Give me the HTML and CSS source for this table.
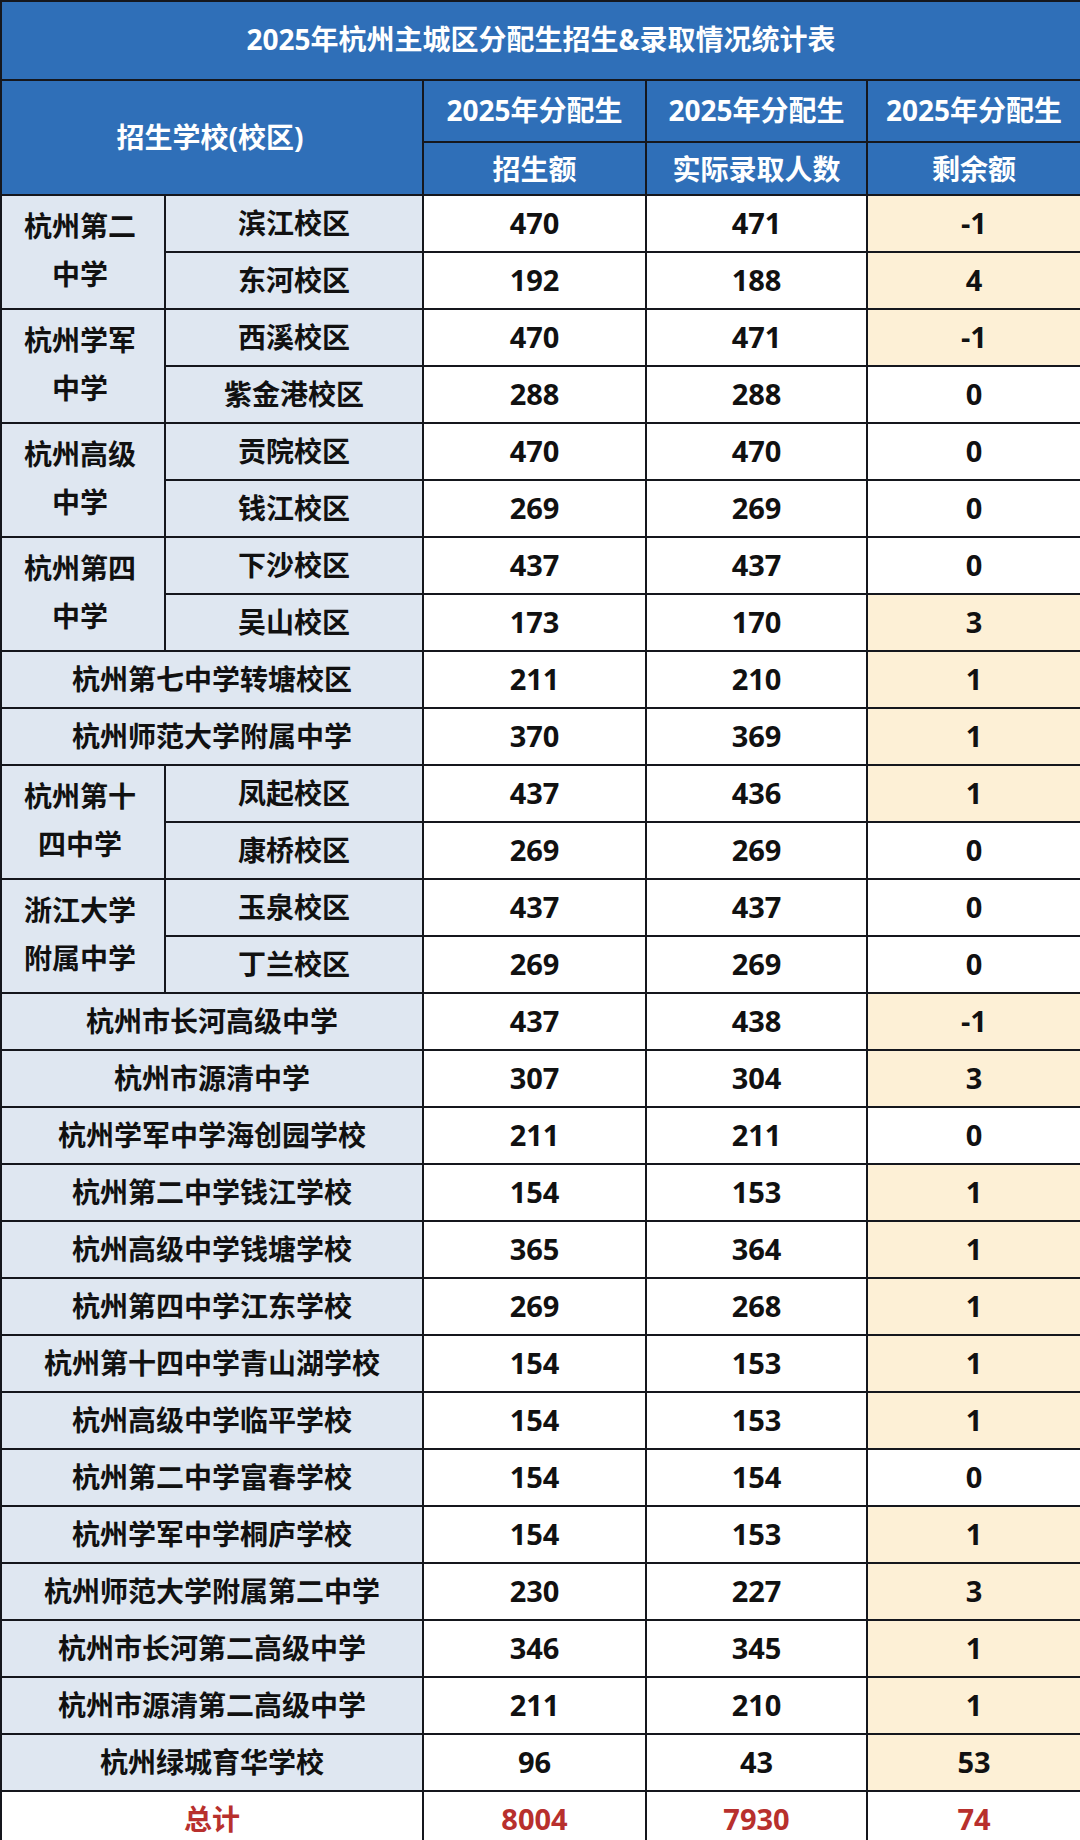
FILE: index.html
```html
<!DOCTYPE html>
<html lang="zh-CN">
<head>
<meta charset="utf-8">
<title>2025年杭州主城区分配生招生&amp;录取情况统计表</title>
<link rel="stylesheet" href="styles.css">
</head>
<body>
<div class="sheet">
  <div class="cell title">2025年杭州主城区分配生招生&amp;录取情况统计表</div>

  <div class="cell head school-head">招生学校(校区)</div>
  <div class="cell head">2025年分配生</div>
  <div class="cell head">2025年分配生</div>
  <div class="cell head">2025年分配生</div>
  <div class="cell head sub">招生额</div>
  <div class="cell head sub">实际录取人数</div>
  <div class="cell head sub">剩余额</div>

  <div class="cell name group">杭州第二<br>中学</div>
  <div class="cell name">滨江校区</div><div class="cell num">470</div><div class="cell num">471</div><div class="cell num hl">-1</div>
  <div class="cell name">东河校区</div><div class="cell num">192</div><div class="cell num">188</div><div class="cell num hl">4</div>

  <div class="cell name group">杭州学军<br>中学</div>
  <div class="cell name">西溪校区</div><div class="cell num">470</div><div class="cell num">471</div><div class="cell num hl">-1</div>
  <div class="cell name">紫金港校区</div><div class="cell num">288</div><div class="cell num">288</div><div class="cell num">0</div>

  <div class="cell name group">杭州高级<br>中学</div>
  <div class="cell name">贡院校区</div><div class="cell num">470</div><div class="cell num">470</div><div class="cell num">0</div>
  <div class="cell name">钱江校区</div><div class="cell num">269</div><div class="cell num">269</div><div class="cell num">0</div>

  <div class="cell name group">杭州第四<br>中学</div>
  <div class="cell name">下沙校区</div><div class="cell num">437</div><div class="cell num">437</div><div class="cell num">0</div>
  <div class="cell name">吴山校区</div><div class="cell num">173</div><div class="cell num">170</div><div class="cell num hl">3</div>

  <div class="cell name wide">杭州第七中学转塘校区</div><div class="cell num">211</div><div class="cell num">210</div><div class="cell num hl">1</div>
  <div class="cell name wide">杭州师范大学附属中学</div><div class="cell num">370</div><div class="cell num">369</div><div class="cell num hl">1</div>

  <div class="cell name group">杭州第十<br>四中学</div>
  <div class="cell name">凤起校区</div><div class="cell num">437</div><div class="cell num">436</div><div class="cell num hl">1</div>
  <div class="cell name">康桥校区</div><div class="cell num">269</div><div class="cell num">269</div><div class="cell num">0</div>

  <div class="cell name group">浙江大学<br>附属中学</div>
  <div class="cell name">玉泉校区</div><div class="cell num">437</div><div class="cell num">437</div><div class="cell num">0</div>
  <div class="cell name">丁兰校区</div><div class="cell num">269</div><div class="cell num">269</div><div class="cell num">0</div>

  <div class="cell name wide">杭州市长河高级中学</div><div class="cell num">437</div><div class="cell num">438</div><div class="cell num hl">-1</div>
  <div class="cell name wide">杭州市源清中学</div><div class="cell num">307</div><div class="cell num">304</div><div class="cell num hl">3</div>
  <div class="cell name wide">杭州学军中学海创园学校</div><div class="cell num">211</div><div class="cell num">211</div><div class="cell num">0</div>
  <div class="cell name wide">杭州第二中学钱江学校</div><div class="cell num">154</div><div class="cell num">153</div><div class="cell num hl">1</div>
  <div class="cell name wide">杭州高级中学钱塘学校</div><div class="cell num">365</div><div class="cell num">364</div><div class="cell num hl">1</div>
  <div class="cell name wide">杭州第四中学江东学校</div><div class="cell num">269</div><div class="cell num">268</div><div class="cell num hl">1</div>
  <div class="cell name wide">杭州第十四中学青山湖学校</div><div class="cell num">154</div><div class="cell num">153</div><div class="cell num hl">1</div>
  <div class="cell name wide">杭州高级中学临平学校</div><div class="cell num">154</div><div class="cell num">153</div><div class="cell num hl">1</div>
  <div class="cell name wide">杭州第二中学富春学校</div><div class="cell num">154</div><div class="cell num">154</div><div class="cell num">0</div>
  <div class="cell name wide">杭州学军中学桐庐学校</div><div class="cell num">154</div><div class="cell num">153</div><div class="cell num hl">1</div>
  <div class="cell name wide">杭州师范大学附属第二中学</div><div class="cell num">230</div><div class="cell num">227</div><div class="cell num hl">3</div>
  <div class="cell name wide">杭州市长河第二高级中学</div><div class="cell num">346</div><div class="cell num">345</div><div class="cell num hl">1</div>
  <div class="cell name wide">杭州市源清第二高级中学</div><div class="cell num">211</div><div class="cell num">210</div><div class="cell num hl">1</div>
  <div class="cell name wide">杭州绿城育华学校</div><div class="cell num">96</div><div class="cell num">43</div><div class="cell num hl">53</div>

  <div class="cell total wide">总计</div><div class="cell total num">8004</div><div class="cell total num">7930</div><div class="cell total num">74</div>
</div>
</body>
</html>
```

FILE: styles.css
```css
html, body {
  margin: 0;
  padding: 0;
  background: #ffffff;
}

body {
  width: 1080px;
  height: 1840px;
  overflow: hidden;
  font-family: "Open Sans", "Noto Sans CJK SC", sans-serif;
  font-weight: 700;
  color: #111111;
}

.sheet {
  display: grid;
  grid-template-columns: 162px 256px 221px 219px 212px;
  grid-template-rows: 77px 60px 51px;
  grid-auto-rows: 55px;
  gap: 2px;
  padding: 2px 0 0 2px;
  background: #15171d;
}

.cell {
  display: flex;
  align-items: center;
  justify-content: center;
  text-align: center;
  font-size: 28px;
  line-height: 1.2;
  background: #ffffff;
  white-space: nowrap;
}

.title {
  grid-column: 1 / -1;
  background: #2f6fb8;
  color: #ffffff;
  font-size: 28px;
  padding-bottom: 2px;
}

.head {
  background: #2f6fb8;
  color: #ffffff;
}

.head.sub {
  padding-top: 2px;
}

.school-head {
  grid-column: 1 / 3;
  grid-row: span 2;
  padding-right: 4px;
}

.name {
  background: #dfe7f1;
  color: #111111;
}

.group {
  grid-row: span 2;
  line-height: 48px;
  padding-bottom: 4px;
  padding-right: 6px;
}

.wide {
  grid-column: span 2;
}

.num {
  color: #111111;
  font-size: 29px;
}

.hl {
  background: #fdf0d6;
}

.total {
  background: #ffffff;
  color: #b8302d;
}
```
